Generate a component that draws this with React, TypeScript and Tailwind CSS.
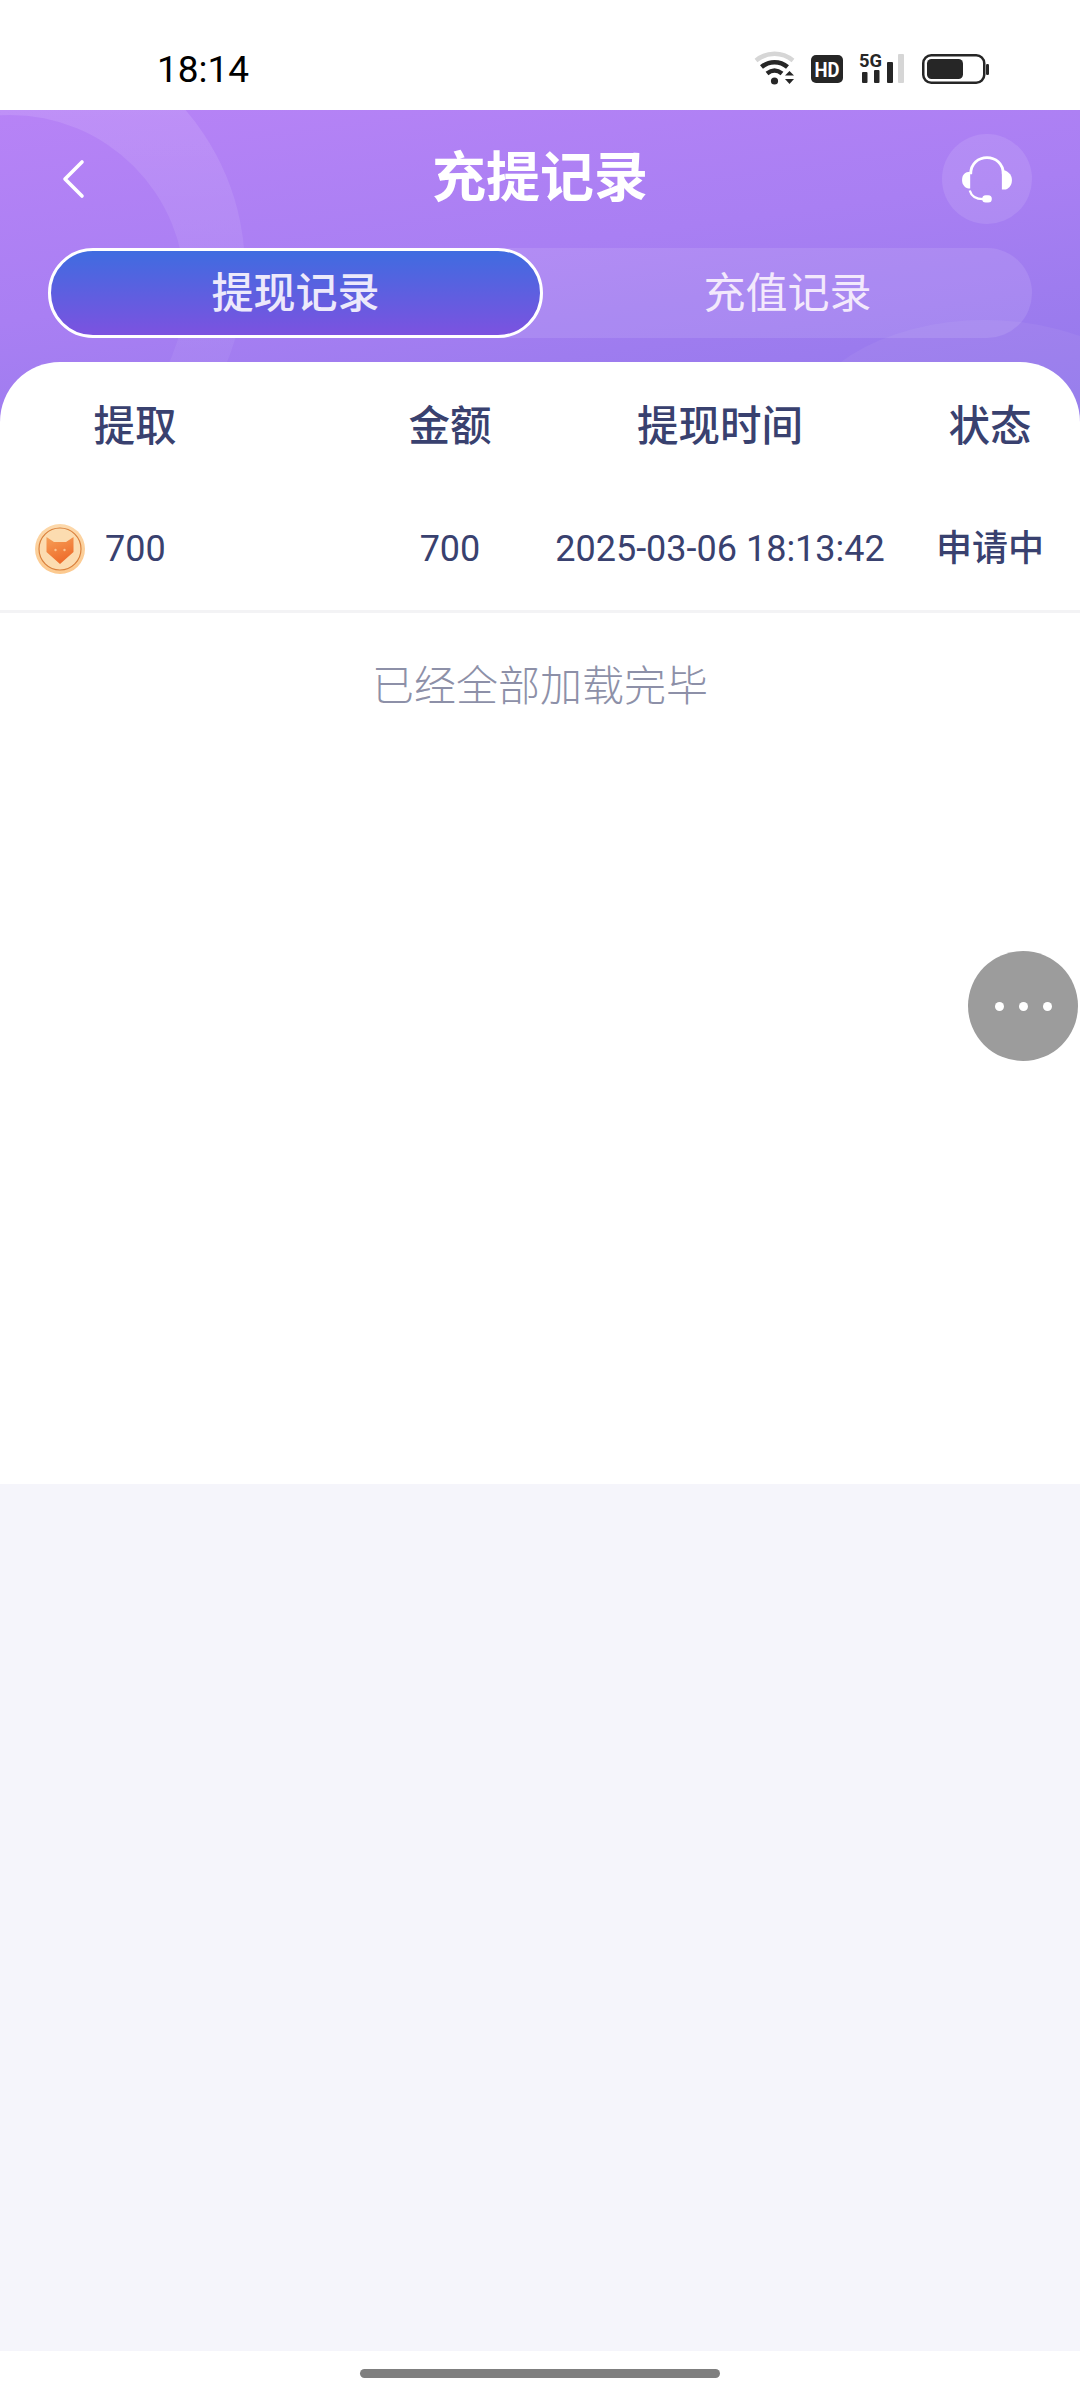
import React from "react";

const FONT = 'font-["Roboto","Noto_Sans_CJK_SC",sans-serif]';

function WifiIcon() {
  return (
    <svg width="46" height="36" viewBox="0 0 46 36" className="block">
      <path d="M2 9.5 C13 0.5 28 0.5 39 9.5" fill="none" stroke="#d6d6d6" strokeWidth="4.5" />
      <path d="M7.5 16 C15 9.5 26 9.5 33.5 16" fill="none" stroke="#262626" strokeWidth="4.5" />
      <path d="M13 22.5 C18 18.5 23 18.5 28 22.5" fill="none" stroke="#262626" strokeWidth="4.5" />
      <circle cx="20.5" cy="30" r="3.6" fill="#262626" />
      <path d="M35.5 20 L40 24.5 L31 24.5 Z" fill="#262626" />
      <path d="M31 28 L40 28 L35.5 33 Z" fill="#262626" />
    </svg>
  );
}

function HdIcon() {
  return (
    <svg width="32" height="28" viewBox="0 0 32 28" className="block">
      <rect width="32" height="28" rx="5" fill="#262626" />
      <text x="16" y="22" textAnchor="middle" fontSize="21" fontWeight="700" fontFamily="Roboto" fill="#fff" textLength="25" lengthAdjust="spacingAndGlyphs">HD</text>
    </svg>
  );
}

function SignalIcon() {
  return (
    <svg width="48" height="32" viewBox="0 0 48 32" className="block overflow-visible">
      <text x="0" y="14" fontSize="19" fontWeight="700" fontFamily="Roboto" fill="#262626" textLength="23" lengthAdjust="spacingAndGlyphs">5G</text>
      <rect x="3" y="19" width="5.5" height="11" rx="1" fill="#262626" />
      <rect x="15" y="17" width="5.5" height="13" rx="1" fill="#262626" />
      <rect x="28" y="9" width="6" height="21" rx="1" fill="#262626" />
      <rect x="39" y="1" width="6" height="29" rx="1" fill="#d6d6d6" />
    </svg>
  );
}

function BatteryIcon() {
  return (
    <svg width="67" height="30" viewBox="0 0 67 30" className="block">
      <rect x="1.25" y="1.25" width="61" height="27.5" rx="8" fill="none" stroke="#262626" strokeWidth="2.5" />
      <rect x="5" y="5" width="36" height="20" rx="4.5" fill="#262626" />
      <rect x="64" y="10" width="3" height="11" rx="1.2" fill="#262626" />
    </svg>
  );
}

function CoinIcon() {
  return (
    <svg width="50" height="50" viewBox="0 0 50 50" className="block shrink-0">
      <defs>
        <radialGradient id="coin" cx="50%" cy="35%" r="65%">
          <stop offset="0%" stopColor="#fde8c8" />
          <stop offset="100%" stopColor="#fcc88c" />
        </radialGradient>
        <linearGradient id="fox" x1="0" y1="0" x2="0.4" y2="1">
          <stop offset="0%" stopColor="#f7a058" />
          <stop offset="100%" stopColor="#ee6c2b" />
        </linearGradient>
      </defs>
      <circle cx="25" cy="25" r="25" fill="url(#coin)" />
      <circle cx="25" cy="25" r="21" fill="#fcdcb0" stroke="#d9803c" strokeWidth="1.2" />
      <path d="M11.5 13 L19 18 L31 18 L38.5 13 L38.5 28 L25 40 L11.5 28 Z" fill="url(#fox)" />
      <circle cx="20.5" cy="26" r="1.2" fill="#fbc490" />
      <circle cx="29.5" cy="26" r="1.2" fill="#fbc490" />
    </svg>
  );
}

function HeadsetIcon() {
  return (
    <svg width="50" height="48" viewBox="0 0 52 50" className="block">
      <path d="M9 20 C9 -3 43 -3 43 20" fill="none" stroke="#fff" strokeWidth="3" />
      <path d="M8.5 17.5 L8.5 35 C3 35 0 31 0 26 C0 21 3 17.5 8.5 17.5 Z" fill="#fff" />
      <path d="M41.5 15.5 C47 15.5 52 20 52 26 C52 32 48 36 44 36 L41.5 36 Z" fill="#fff" />
      <path d="M8 37 C10 44 15 46 22 46" fill="none" stroke="#fff" strokeWidth="2.4" />
      <rect x="21" y="42" width="10" height="7.5" rx="3.7" fill="#fff" />
    </svg>
  );
}

function HeaderDecor() {
  return (
    <svg width="1080" height="320" viewBox="0 0 1080 320" className="absolute inset-0 pointer-events-none">
      <defs>
        <linearGradient id="ring" x1="0" y1="0" x2="0" y2="1">
          <stop offset="0%" stopColor="#fff" stopOpacity="0.13" />
          <stop offset="100%" stopColor="#fff" stopOpacity="0.02" />
        </linearGradient>
      </defs>
      <path
        fillRule="evenodd"
        d="M-300 160 A 245 245 0 0 1 0 -85 A 245 245 0 0 1 245 160 A 245 245 0 0 1 0 405 A 245 245 0 0 1 -300 160 Z M0 180 m-165 0 A 175 175 0 1 0 185 180 A 175 175 0 1 0 -165 180 Z"
        fill="url(#ring)"
      />
      <ellipse cx="985" cy="330" rx="190" ry="120" fill="#ffffff" fillOpacity="0.05" />
    </svg>
  );
}

export default function App() {
  return (
    <div className={`${FONT} relative w-[1080px] h-[2400px] overflow-hidden bg-white flex flex-col`}>
      <div className="h-[110px] shrink-0 flex items-center justify-between pt-[28px] pl-[157px] pr-[91px] bg-white">
        <span className="text-[37px] leading-none font-normal text-black">18:14</span>
        <div className="flex items-center">
          <WifiIcon />
          <div className="ml-[11px]"><HdIcon /></div>
          <div className="ml-[16px]"><SignalIcon /></div>
          <div className="ml-[15px]"><BatteryIcon /></div>
        </div>
      </div>

      <div className="relative h-[320px] shrink-0 bg-[linear-gradient(172deg,#b783f6_0%,#a97ff3_45%,#9078ea_100%)] px-[48px] pt-[24px]">
        <HeaderDecor />
        <div className="relative flex items-center justify-between h-[90px]">
          <div className="w-[90px] h-[90px] flex items-center">
            <svg width="24" height="40" viewBox="0 0 24 40" className="ml-[13px]">
              <path d="M21 3 L4 20 L21 37" fill="none" stroke="#fff" strokeWidth="3.6" strokeLinecap="round" strokeLinejoin="round" />
            </svg>
          </div>
          <span className="text-[54px] leading-none font-bold text-white">充提记录</span>
          <div className="w-[90px] h-[90px] rounded-full bg-white/10 flex items-center justify-center">
            <HeadsetIcon />
          </div>
        </div>
        <div className="relative mt-[24px] h-[90px] flex rounded-full bg-white/10">
          <div className="w-[495px] h-full rounded-full border-[3px] border-white bg-[linear-gradient(180deg,#3f6ce0_0%,#7c52e0_100%)] flex items-center justify-center text-[42px] font-medium text-[#ece9fb]">
            提现记录
          </div>
          <div className="flex-1 flex items-center justify-center text-[42px] text-[#f3e9fc]">充值记录</div>
        </div>
      </div>

      <div className="relative -mt-[68px] h-[1122px] shrink-0 bg-white rounded-t-[60px] text-[#39416f]">
        <div className="grid grid-cols-[360px_180px_360px_180px] items-center h-[130px] text-[41.5px] font-medium text-center">
          <div className="pr-[90px]">提取</div>
          <div>金额</div>
          <div>提现时间</div>
          <div>状态</div>
        </div>
        <div className="grid grid-cols-[360px_180px_360px_180px] items-center h-[121px] pb-[4px] border-b-[3px] border-[#f3f3f5] text-[36px] text-center">
          <div className="flex items-center pl-[35px] gap-[20px]">
            <CoinIcon />
            <span>700</span>
          </div>
          <div>700</div>
          <div className="whitespace-nowrap">2025-03-06 18:13:42</div>
          <div className="font-medium">申请中</div>
        </div>
        <div className="text-center text-[42px] font-light text-[#8d90a8] mt-[44px] leading-[60px]">已经全部加载完毕</div>
      </div>

      <div className="flex-1 bg-[#f5f5fb]" />
      <div className="h-[49px] shrink-0 bg-white flex justify-center pt-[18px]">
        <div className="w-[360px] h-[9px] rounded-full bg-[#7f7f7f]" />
      </div>

      <div className="absolute left-[968px] top-[951px] w-[110px] h-[110px] rounded-full bg-[#9c9c9c] flex items-center justify-center gap-[15px]">
        <span className="w-[9px] h-[9px] rounded-full bg-white" />
        <span className="w-[9px] h-[9px] rounded-full bg-white" />
        <span className="w-[9px] h-[9px] rounded-full bg-white" />
      </div>
    </div>
  );
}
